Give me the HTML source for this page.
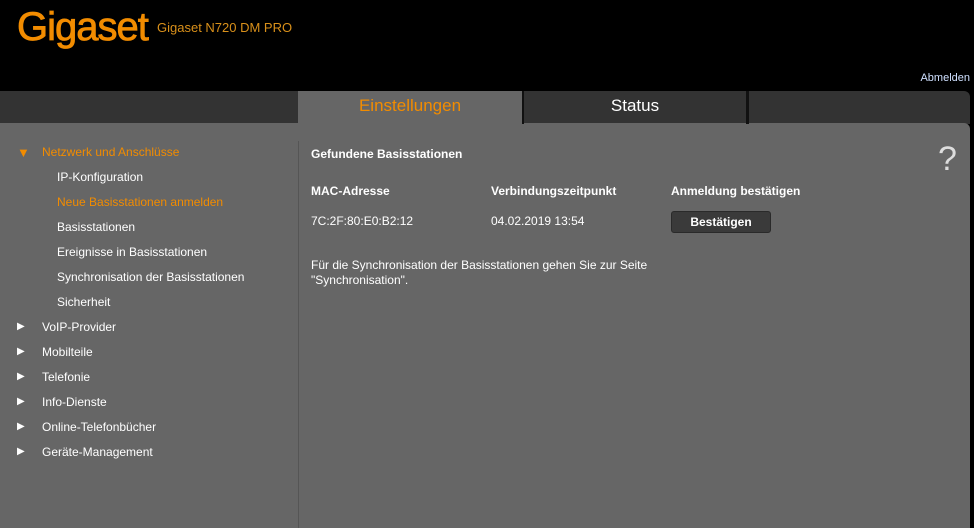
<!DOCTYPE html>
<html><head><meta charset="utf-8"><style>
*{margin:0;padding:0;box-sizing:border-box}
body{width:974px;height:528px;background:#000;font-family:"Liberation Sans",sans-serif;position:relative;overflow:hidden;font-size:12px;color:#fff}
.logo{position:absolute;left:17px;top:5px;font-size:40px;color:#f28c00;letter-spacing:-1px;font-weight:normal;-webkit-text-stroke:0.8px #f28c00}
.model{position:absolute;left:157px;top:20px;font-size:13px;color:#d9901a}
.abm{position:absolute;right:4px;top:72px;font-size:11px;color:#cfe0ff}
.tabbar{position:absolute;left:0;top:91px;width:970px;height:33px;background:#333;border-radius:0 6px 0 0}
.tab{position:absolute;top:91px;height:33px;text-align:center;font-size:17px;line-height:30px}
.panel{position:absolute;left:0;top:123px;width:970px;height:405px;background:#666;border-radius:0 6px 0 0}
.div{position:absolute;left:298px;top:141px;width:1px;height:387px;background:#555}
.nav{position:absolute;font-size:12px}
.o{color:#f28c00}
.arr{position:absolute;left:17px;font-size:10px;color:#fff}
b{font-weight:bold}
</style></head><body>
<div class="logo">Gigaset</div>
<div class="model">Gigaset N720 DM PRO</div>
<div class="abm">Abmelden</div>
<div class="tabbar"></div>
<div class="panel"></div>
<div class="tab" style="left:298px;width:224px;background:#666;color:#f28c00">Einstellungen</div>
<div class="tab" style="left:522px;width:2px;background:#111"></div>
<div class="tab" style="left:524px;width:222px;color:#fff">Status</div>
<div class="tab" style="left:746px;width:3px;background:#111"></div>
<div class="div"></div>
<div class="arr" style="top:145px;font-size:13px;color:#f28c00">▼</div>
<div class="nav o" style="left:42px;top:145px">Netzwerk und Anschlüsse</div>
<div class="nav" style="left:57px;top:170px">IP-Konfiguration</div>
<div class="nav o" style="left:57px;top:195px">Neue Basisstationen anmelden</div>
<div class="nav" style="left:57px;top:220px">Basisstationen</div>
<div class="nav" style="left:57px;top:245px">Ereignisse in Basisstationen</div>
<div class="nav" style="left:57px;top:270px">Synchronisation der Basisstationen</div>
<div class="nav" style="left:57px;top:295px">Sicherheit</div>
<div class="arr" style="top:321px">▶</div><div class="nav" style="left:42px;top:320px">VoIP-Provider</div>
<div class="arr" style="top:346px">▶</div><div class="nav" style="left:42px;top:345px">Mobilteile</div>
<div class="arr" style="top:371px">▶</div><div class="nav" style="left:42px;top:370px">Telefonie</div>
<div class="arr" style="top:396px">▶</div><div class="nav" style="left:42px;top:395px">Info-Dienste</div>
<div class="arr" style="top:421px">▶</div><div class="nav" style="left:42px;top:420px">Online-Telefonbücher</div>
<div class="arr" style="top:446px">▶</div><div class="nav" style="left:42px;top:445px">Geräte-Management</div>
<div class="nav" style="left:311px;top:147px"><b>Gefundene Basisstationen</b></div>
<div style="position:absolute;left:938px;top:140px;font-size:34px;color:#ddd">?</div>
<div class="nav" style="left:311px;top:184px"><b>MAC-Adresse</b></div>
<div class="nav" style="left:491px;top:184px"><b>Verbindungszeitpunkt</b></div>
<div class="nav" style="left:671px;top:184px"><b>Anmeldung bestätigen</b></div>
<div class="nav" style="left:311px;top:214px">7C:2F:80:E0:B2:12</div>
<div class="nav" style="left:491px;top:214px">04.02.2019 13:54</div>
<div style="position:absolute;left:671px;top:211px;width:100px;height:22px;background:#3a3a3a;border:1px solid #2a2a2a;border-radius:3px;text-align:center;line-height:20px;font-weight:bold;font-size:12px">Bestätigen</div>
<div class="nav" style="left:311px;top:258px;line-height:15px">Für die Synchronisation der Basisstationen gehen Sie zur Seite<br>"Synchronisation".</div>
</body></html>
